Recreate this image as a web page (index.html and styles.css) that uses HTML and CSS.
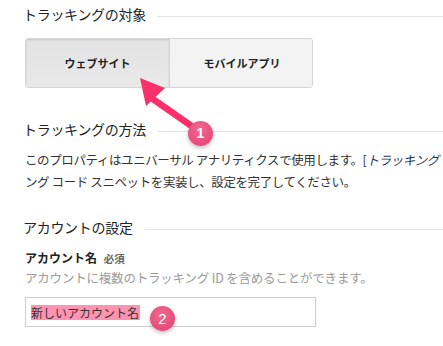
FILE: index.html
```html
<!DOCTYPE html>
<html lang="ja">
<head>
    <meta charset="UTF-8">
    <title>新しいアカウント</title>
    <link rel="stylesheet" href="styles.css">
</head>
<body>
<div class="page">
    <div class="section-title first">
        <h2>トラッキングの対象</h2>
        <span class="rule"></span>
    </div>

    <div class="toggle">
        <button class="toggle-btn active">ウェブサイト</button>
        <button class="toggle-btn">モバイルアプリ</button>
    </div>

    <div class="section-title second">
        <h2>トラッキングの方法</h2>
        <span class="rule"></span>
    </div>

    <p class="desc">
        <span class="line">このプロパティはユニバーサル アナリティクスで使用します。[<a href="#" class="link">トラッキング</a></span>
        <span class="line">ング コード スニペットを実装し、設定を完了してください。</span>
    </p>

    <div class="section-title third">
        <h2>アカウントの設定</h2>
        <span class="rule rule-short"></span>
    </div>

    <div class="field">
        <label class="field-label">アカウント名 <span class="req">必須</span></label>
        <div class="field-help">アカウントに複数のトラッキング ID を含めることができます。</div>
        <div class="input"><span class="selected">新しいアカウント名</span></div>
    </div>

    <!-- annotation overlay -->
    <svg class="arrow" width="443" height="346" viewBox="0 0 443 346">
        <line x1="193" y1="127" x2="150" y2="97" stroke="#fb2f6c" stroke-width="6.5" stroke-linecap="round"/>
        <polygon points="140,78 165,88 146,106" fill="#fb2f6c"/>
    </svg>
    <span class="badge badge-one">1</span>
    <span class="badge badge-two">2</span>
</div>
</body>
</html>
```

FILE: styles.css
```css
html, body {
    margin: 0;
    padding: 0;
    background: #fff;
    overflow: hidden;
}

body {
    font-family: "Noto Sans CJK JP", "Noto Sans", sans-serif;
    color: #333;
}

.page {
    position: relative;
    width: 443px;
    height: 346px;
    padding-left: 25px;
    box-sizing: border-box;
}

.section-title {
    display: flex;
    align-items: center;
    margin-left: -2px;
}

.section-title h2 {
    margin: 0;
    font-size: 14px;
    font-weight: normal;
    line-height: 20px;
    color: #222;
    letter-spacing: -0.3px;
}

.rule {
    flex: 1;
    height: 1px;
    background: #e2e2e2;
    margin-left: 11px;
    margin-top: 4px;
}

.rule-short {
    margin-left: 12px;
}

.first {
    padding-top: 4px;
}

.toggle {
    display: flex;
    margin-top: 14px;
    width: 288px;
    height: 50px;
    border: 1px solid #d6d6d6;
    border-radius: 3px;
    box-sizing: border-box;
    overflow: hidden;
}

.toggle-btn {
    flex: 0 0 144px;
    border: none;
    margin: 0;
    padding: 0;
    font-family: inherit;
    font-size: 11px;
    font-weight: bold;
    color: #222;
    background: #f3f3f3;
}

.toggle-btn.active {
    background: linear-gradient(#e3e3e3, #e9e9e9);
    box-shadow: inset 0 1px 2px rgba(0, 0, 0, 0.12);
    border-right: 1px solid #d6d6d6;
}

.second {
    margin-top: 31px;
}

.desc {
    margin: 10px 0 0;
    font-size: 12.5px;
    line-height: 22px;
    color: #333;
    white-space: nowrap;
    letter-spacing: -0.4px;
}

.desc .line {
    display: block;
}

.link {
    color: #1d3557;
    font-style: italic;
    text-decoration: none;
}

.third {
    margin-top: 24px;
}

.field {
    margin-top: 12px;
}

.field-label {
    display: block;
    font-size: 12px;
    font-weight: bold;
    line-height: 18px;
    color: #222;
}

.req {
    font-size: 10.5px;
    color: #666;
    margin-left: 4px;
}

.field-help {
    font-size: 12.5px;
    line-height: 18px;
    color: #9a9a9a;
    margin-top: 1px;
    letter-spacing: -0.2px;
}

.input {
    margin-top: 10px;
    width: 291px;
    height: 30px;
    border: 1px solid #cfcfcf;
    box-sizing: border-box;
    display: flex;
    align-items: center;
    padding-left: 5px;
}

.selected {
    background: #ff93b2;
    color: #333;
    font-size: 12px;
    line-height: 15px;
    padding-right: 1px;
}

.arrow {
    position: absolute;
    left: 0;
    top: 0;
}

.badge {
    position: absolute;
    width: 25px;
    height: 25px;
    border-radius: 50%;
    background: radial-gradient(circle at 45% 35%, #f06a91, #e33e6e);
    box-shadow: 0 2px 4px rgba(0, 0, 0, 0.25);
    color: #fff;
    font-family: "Liberation Sans", Arial, sans-serif;
    font-size: 14px;
    font-weight: bold;
    line-height: 25px;
    text-align: center;
}

.badge-one {
    left: 188px;
    top: 121px;
}

.badge-two {
    left: 150px;
    top: 306px;
    font-weight: normal;
    font-size: 15px;
}
```
